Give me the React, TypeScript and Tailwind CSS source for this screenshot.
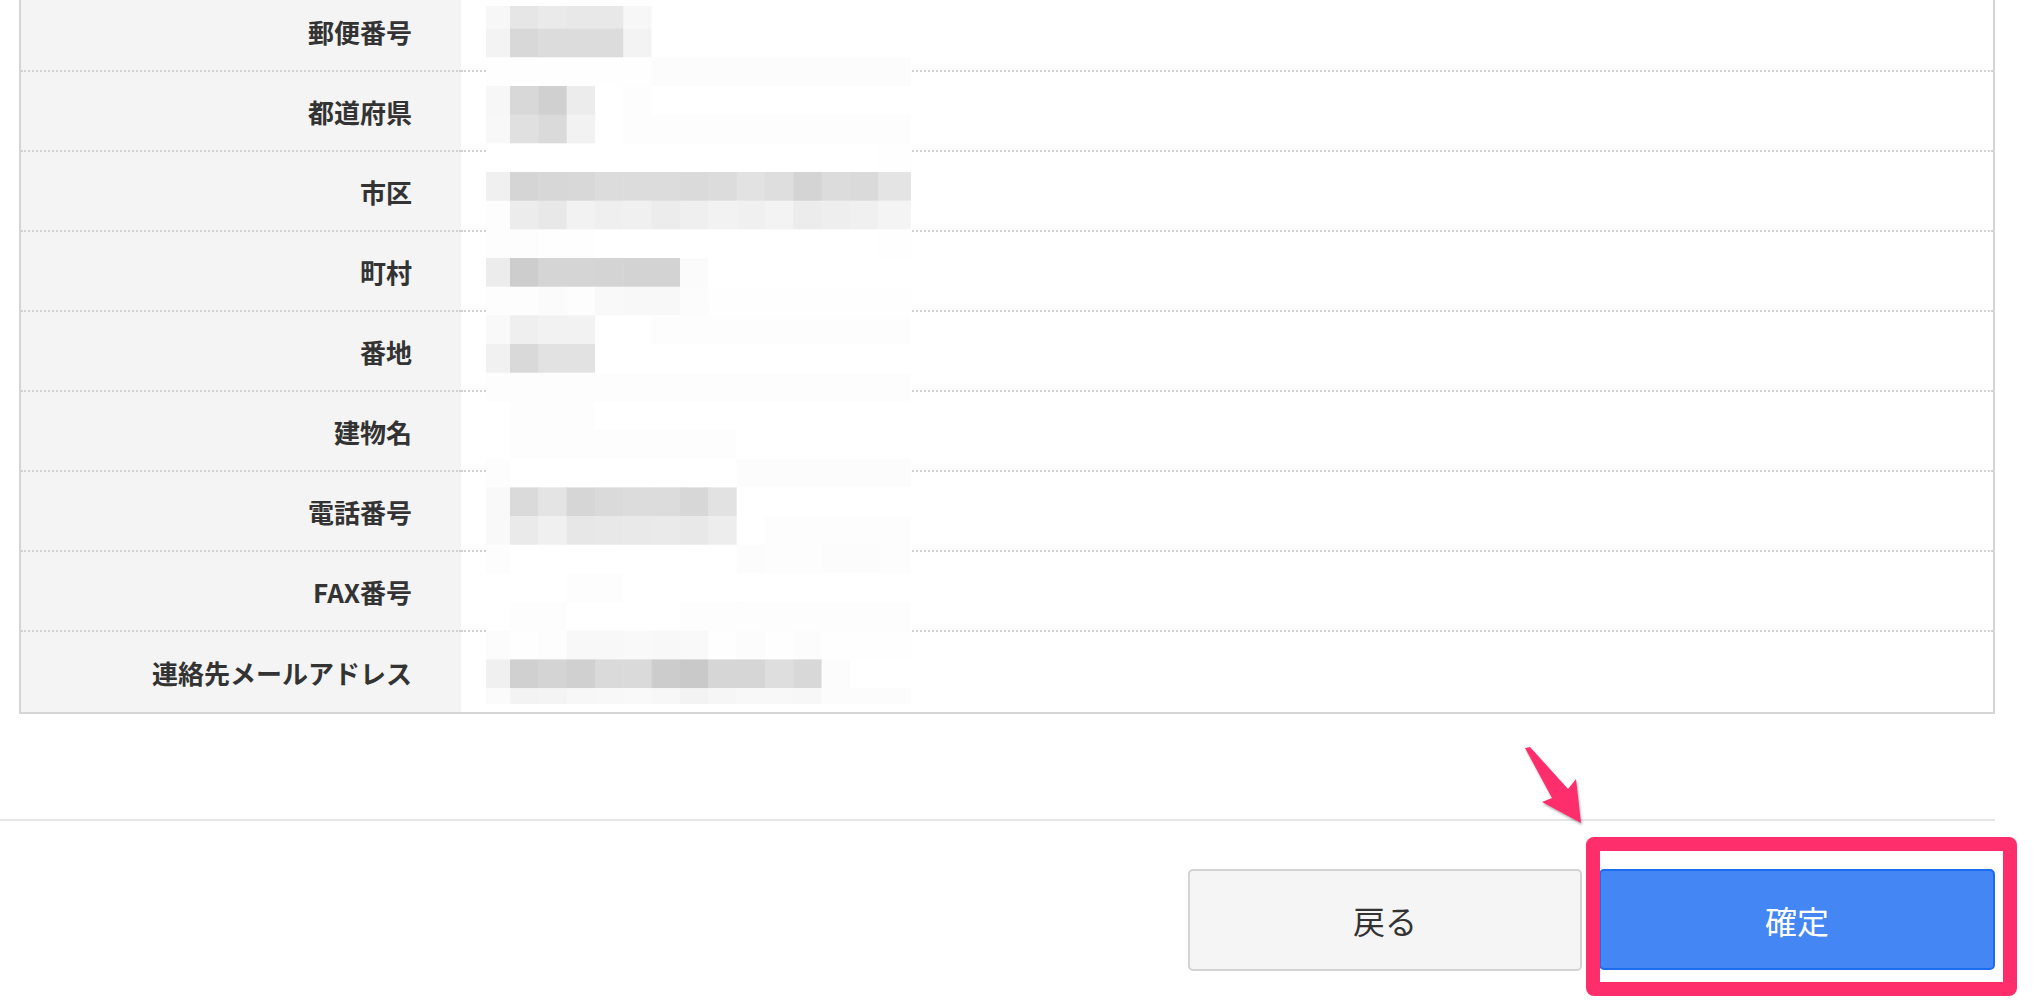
import React from 'react';

const rows = [
  '郵便番号',
  '都道府県',
  '市区',
  '町村',
  '番地',
  '建物名',
  '電話番号',
  'FAX番号',
  '連絡先メールアドレス',
];

// pixelated (redacted) values, one hex gray per mosaic cell
const mosaic = [
  'f7 e6 ea e8 e8 f7 ff ff ff ff ff ff ff ff ff',
  'f3 d8 dc dc dc f3 ff ff ff ff ff ff ff ff ff',
  'fe fe fe fe fe fe fc fc fc fc fc fc fc fc fc',
  'f7 d8 d0 ec ff fd ff ff ff ff ff ff ff ff ff',
  'f8 e0 da f2 ff fd fd fd fd fd fd fd fd fd fd',
  'ff ff ff ff ff ff ff ff ff ff ff ff ff ff fe',
  'f0 d5 d7 d8 dc dc dc da dc e2 de d4 dc da e4',
  'fd ec e8 f2 ef f0 ec ef f2 f0 f3 ec ee f0 f4',
  'fd fd fe fe ff ff ff ff ff ff ff ff ff ff fe',
  'ec cd d5 d5 d4 d3 d3 fb ff ff ff ff ff ff ff',
  'fd fd fb fd f9 f8 f8 fc fe fe fe fe fe fe fe',
  'f9 ef f2 f2 ff ff fd fd fd fd fd fd fd fd fd',
  'f1 d9 e2 e2 ff ff ff ff ff ff ff ff ff ff ff',
  'fd fd fd fd fd fd fd fd fd fd fd fd fd fd fd',
  'ff fd fd fd ff ff ff ff ff ff ff ff ff ff ff',
  'ff fd fd fd fd fd fd fd fd ff ff ff ff ff ff',
  'fd ff ff ff ff ff ff ff ff fc fc fc fc fc fc',
  'f9 da e4 d6 da dc dc d7 e2 ff ff ff ff ff ff',
  'f9 ea f0 e7 e8 e9 ea e8 ed ff fd fd fd fd fd',
  'fd ff ff ff ff ff ff ff ff fc fd fd fc fc fd',
  'ff ff ff fd fd ff ff ff ff ff ff ff ff ff ff',
  'ff fd fd ff ff ff ff fd fd fd fd fd fd fd fd',
  'fc fe fd f8 f8 f9 f8 f9 fe fc fe fc fe fe fe',
  'f0 d0 d4 d0 da da cc c9 d6 d6 de d8 fc ff ff',
  'fb f3 f4 f7 f8 f9 f7 f3 f6 f8 f8 f7 fc fc fc',
];

const CW = 28.33;
const RH = 28.67;

function Mosaic() {
  return (
    <svg className="absolute left-[486px] top-0" width="425" height="704" viewBox="0 0 425 704">
      {mosaic.map((line, r) =>
        line.split(' ').map((g, c) => {
          const x = c === 0 ? 0 : 24 + (c - 1) * CW;
          const w = c === 0 ? 24 : c === 14 ? 425 - x : CW;
          const y = r === 0 ? 6 : r * RH;
          const h = r === 0 ? RH - 6 : r === 24 ? 704 - y : RH;
          return <rect key={`${r}-${c}`} x={x} y={y} width={w + 0.5} height={h + 0.5} fill={`#${g}${g}${g}`} />;
        })
      )}
    </svg>
  );
}

function Arrow() {
  return (
    <svg
      className="absolute left-[1510px] top-[735px] drop-shadow-[1px_2px_1px_rgba(0,0,0,0.3)]"
      width="90"
      height="100"
      viewBox="0 0 90 100"
    >
      <polygon points="15,13 20,12 58,54 66,44 71,88 32,67 42,63" fill="#fe2e6c" />
    </svg>
  );
}

export default function App() {
  return (
    <div className="relative w-[2040px] h-[1004px] overflow-hidden bg-white font-['Noto_Sans_CJK_JP','Noto_Sans',sans-serif]">
      {/* Confirmation table */}
      <div className="-mt-[8px] ml-[19px] mr-[45px] border-x-2 border-b-2 border-[#d5d5d5]">
        {rows.map((label, i) => {
          const last = i === rows.length - 1;
          return (
            <div key={label} className="flex h-[80px]">
              <div
                className={`w-[440px] flex items-center justify-end pr-[49px] bg-[#f4f4f4] text-[26px] font-bold text-[#333] ${
                  last ? '' : 'border-b-2 border-dotted border-[#d2d2d2]'
                }`}
              >
                {label}
              </div>
              <div className={`flex-1 bg-white ${last ? '' : 'border-b-2 border-dotted border-[#d2d2d2]'}`} />
            </div>
          );
        })}
      </div>

      <Mosaic />

      {/* Divider */}
      <div className="mt-[105px] mr-[45px] border-t-2 border-[#e6e6e6]" />

      {/* Actions */}
      <div className="mt-[48px] mr-[45px] flex justify-end gap-[17px]">
        <button className="w-[394px] h-[102px] rounded-[5px] border-2 border-[#d3d3d3] bg-[#f5f5f5] text-[32px] text-[#333]">
          戻る
        </button>
        <button className="w-[396px] h-[101px] rounded-[5px] border-2 border-[#1b6cf0] bg-[#4486f3] text-[32px] text-white">
          確定
        </button>
      </div>

      {/* Annotation */}
      <div className="absolute left-[1586px] top-[837px] w-[431px] h-[159px] rounded-[8px] border-[14px] border-[#fe2e6c]" />
      <Arrow />
    </div>
  );
}
